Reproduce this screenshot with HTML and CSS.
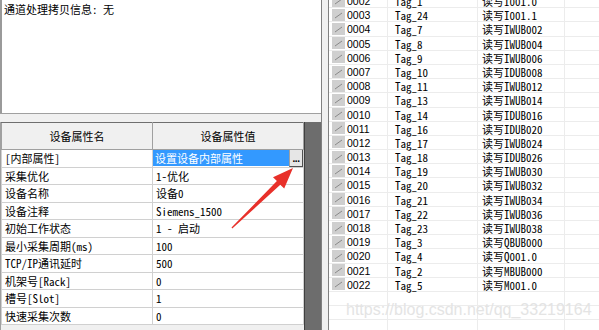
FILE: index.html
```html
<!DOCTYPE html>
<html>
<head>
<meta charset="utf-8">
<link rel="stylesheet" href="styles.css">
</head>
<body>
<div class="app">
  <div class="left">
    <div class="info">通道处理拷贝信息: 无</div>
    <div class="hsplit"></div>
    <div class="gridwrap">
      <table class="props">
        <colgroup><col class="c1"><col class="c2"></colgroup>
        <thead>
          <tr><th>设备属性名</th><th>设备属性值</th></tr>
        </thead>
        <tbody>
          <tr><td>[内部属性]</td><td class="sel"><span class="seltext">设置设备内部属性</span><span class="dots">...</span></td></tr>
          <tr><td>采集优化</td><td>1-优化</td></tr>
          <tr><td>设备名称</td><td>设备0</td></tr>
          <tr><td>设备注释</td><td>Siemens_1500</td></tr>
          <tr><td>初始工作状态</td><td>1 - 启动</td></tr>
          <tr><td>最小采集周期(ms)</td><td>100</td></tr>
          <tr><td>TCP/IP通讯延时</td><td>500</td></tr>
          <tr><td>机架号[Rack]</td><td>0</td></tr>
          <tr><td>槽号[Slot]</td><td>1</td></tr>
          <tr><td>快速采集次数</td><td>0</td></tr>
        </tbody>
      </table>
      <div class="filler"></div>
    </div>
  </div>
  <div class="vsplit"></div>
  <div class="right">
    <div class="list">
      <div class="row"><span class="ic"><svg width="13" height="12" viewBox="0 0 13 12"><rect x="0" y="0" width="13" height="12" fill="#cfcfcf"/><path d="M3 9 L10 4" stroke="#8a8a8a" stroke-width="1"/></svg></span><span class="no">0002</span><span class="tag">Tag_1</span><span class="rw">读写I001.0</span><span class="e"></span></div>
      <div class="row"><span class="ic"><svg width="13" height="12" viewBox="0 0 13 12"><rect x="0" y="0" width="13" height="12" fill="#cfcfcf"/><path d="M3 9 L10 4" stroke="#8a8a8a" stroke-width="1"/></svg></span><span class="no">0003</span><span class="tag">Tag_24</span><span class="rw">读写I001.1</span><span class="e"></span></div>
      <div class="row"><span class="ic"><svg width="13" height="12" viewBox="0 0 13 12"><rect x="0" y="0" width="13" height="12" fill="#cfcfcf"/><path d="M3 9 L10 4" stroke="#8a8a8a" stroke-width="1"/></svg></span><span class="no">0004</span><span class="tag">Tag_7</span><span class="rw">读写IWUB002</span><span class="e"></span></div>
      <div class="row"><span class="ic"><svg width="13" height="12" viewBox="0 0 13 12"><rect x="0" y="0" width="13" height="12" fill="#cfcfcf"/><path d="M3 9 L10 4" stroke="#8a8a8a" stroke-width="1"/></svg></span><span class="no">0005</span><span class="tag">Tag_8</span><span class="rw">读写IWUB004</span><span class="e"></span></div>
      <div class="row"><span class="ic"><svg width="13" height="12" viewBox="0 0 13 12"><rect x="0" y="0" width="13" height="12" fill="#cfcfcf"/><path d="M3 9 L10 4" stroke="#8a8a8a" stroke-width="1"/></svg></span><span class="no">0006</span><span class="tag">Tag_9</span><span class="rw">读写IWUB006</span><span class="e"></span></div>
      <div class="row"><span class="ic"><svg width="13" height="12" viewBox="0 0 13 12"><rect x="0" y="0" width="13" height="12" fill="#cfcfcf"/><path d="M3 9 L10 4" stroke="#8a8a8a" stroke-width="1"/></svg></span><span class="no">0007</span><span class="tag">Tag_10</span><span class="rw">读写IDUB008</span><span class="e"></span></div>
      <div class="row"><span class="ic"><svg width="13" height="12" viewBox="0 0 13 12"><rect x="0" y="0" width="13" height="12" fill="#cfcfcf"/><path d="M3 9 L10 4" stroke="#8a8a8a" stroke-width="1"/></svg></span><span class="no">0008</span><span class="tag">Tag_11</span><span class="rw">读写IWUB012</span><span class="e"></span></div>
      <div class="row"><span class="ic"><svg width="13" height="12" viewBox="0 0 13 12"><rect x="0" y="0" width="13" height="12" fill="#cfcfcf"/><path d="M3 9 L10 4" stroke="#8a8a8a" stroke-width="1"/></svg></span><span class="no">0009</span><span class="tag">Tag_13</span><span class="rw">读写IWUB014</span><span class="e"></span></div>
      <div class="row"><span class="ic"><svg width="13" height="12" viewBox="0 0 13 12"><rect x="0" y="0" width="13" height="12" fill="#cfcfcf"/><path d="M3 9 L10 4" stroke="#8a8a8a" stroke-width="1"/></svg></span><span class="no">0010</span><span class="tag">Tag_14</span><span class="rw">读写IDUB016</span><span class="e"></span></div>
      <div class="row"><span class="ic"><svg width="13" height="12" viewBox="0 0 13 12"><rect x="0" y="0" width="13" height="12" fill="#cfcfcf"/><path d="M3 9 L10 4" stroke="#8a8a8a" stroke-width="1"/></svg></span><span class="no">0011</span><span class="tag">Tag_16</span><span class="rw">读写IDUB020</span><span class="e"></span></div>
      <div class="row"><span class="ic"><svg width="13" height="12" viewBox="0 0 13 12"><rect x="0" y="0" width="13" height="12" fill="#cfcfcf"/><path d="M3 9 L10 4" stroke="#8a8a8a" stroke-width="1"/></svg></span><span class="no">0012</span><span class="tag">Tag_17</span><span class="rw">读写IWUB024</span><span class="e"></span></div>
      <div class="row"><span class="ic"><svg width="13" height="12" viewBox="0 0 13 12"><rect x="0" y="0" width="13" height="12" fill="#cfcfcf"/><path d="M3 9 L10 4" stroke="#8a8a8a" stroke-width="1"/></svg></span><span class="no">0013</span><span class="tag">Tag_18</span><span class="rw">读写IDUB026</span><span class="e"></span></div>
      <div class="row"><span class="ic"><svg width="13" height="12" viewBox="0 0 13 12"><rect x="0" y="0" width="13" height="12" fill="#cfcfcf"/><path d="M3 9 L10 4" stroke="#8a8a8a" stroke-width="1"/></svg></span><span class="no">0014</span><span class="tag">Tag_19</span><span class="rw">读写IWUB030</span><span class="e"></span></div>
      <div class="row"><span class="ic"><svg width="13" height="12" viewBox="0 0 13 12"><rect x="0" y="0" width="13" height="12" fill="#cfcfcf"/><path d="M3 9 L10 4" stroke="#8a8a8a" stroke-width="1"/></svg></span><span class="no">0015</span><span class="tag">Tag_20</span><span class="rw">读写IWUB032</span><span class="e"></span></div>
      <div class="row"><span class="ic"><svg width="13" height="12" viewBox="0 0 13 12"><rect x="0" y="0" width="13" height="12" fill="#cfcfcf"/><path d="M3 9 L10 4" stroke="#8a8a8a" stroke-width="1"/></svg></span><span class="no">0016</span><span class="tag">Tag_21</span><span class="rw">读写IWUB034</span><span class="e"></span></div>
      <div class="row"><span class="ic"><svg width="13" height="12" viewBox="0 0 13 12"><rect x="0" y="0" width="13" height="12" fill="#cfcfcf"/><path d="M3 9 L10 4" stroke="#8a8a8a" stroke-width="1"/></svg></span><span class="no">0017</span><span class="tag">Tag_22</span><span class="rw">读写IWUB036</span><span class="e"></span></div>
      <div class="row"><span class="ic"><svg width="13" height="12" viewBox="0 0 13 12"><rect x="0" y="0" width="13" height="12" fill="#cfcfcf"/><path d="M3 9 L10 4" stroke="#8a8a8a" stroke-width="1"/></svg></span><span class="no">0018</span><span class="tag">Tag_23</span><span class="rw">读写IWUB038</span><span class="e"></span></div>
      <div class="row"><span class="ic"><svg width="13" height="12" viewBox="0 0 13 12"><rect x="0" y="0" width="13" height="12" fill="#cfcfcf"/><path d="M3 9 L10 4" stroke="#8a8a8a" stroke-width="1"/></svg></span><span class="no">0019</span><span class="tag">Tag_3</span><span class="rw">读写QBUB000</span><span class="e"></span></div>
      <div class="row"><span class="ic"><svg width="13" height="12" viewBox="0 0 13 12"><rect x="0" y="0" width="13" height="12" fill="#cfcfcf"/><path d="M3 9 L10 4" stroke="#8a8a8a" stroke-width="1"/></svg></span><span class="no">0020</span><span class="tag">Tag_4</span><span class="rw">读写Q001.0</span><span class="e"></span></div>
      <div class="row"><span class="ic"><svg width="13" height="12" viewBox="0 0 13 12"><rect x="0" y="0" width="13" height="12" fill="#cfcfcf"/><path d="M3 9 L10 4" stroke="#8a8a8a" stroke-width="1"/></svg></span><span class="no">0021</span><span class="tag">Tag_2</span><span class="rw">读写MBUB000</span><span class="e"></span></div>
      <div class="row"><span class="ic"><svg width="13" height="12" viewBox="0 0 13 12"><rect x="0" y="0" width="13" height="12" fill="#cfcfcf"/><path d="M3 9 L10 4" stroke="#8a8a8a" stroke-width="1"/></svg></span><span class="no">0022</span><span class="tag">Tag_5</span><span class="rw">读写M001.0</span><span class="e"></span></div>
      <div class="row blank"><span class="ic"></span><span class="no"></span><span class="tag"></span><span class="rw"></span><span class="e"></span></div>
      <div class="row blank"><span class="ic"></span><span class="no"></span><span class="tag"></span><span class="rw"></span><span class="e"></span></div>
      <div class="row blank"><span class="ic"></span><span class="no"></span><span class="tag"></span><span class="rw"></span><span class="e"></span></div>
    </div>
    <div class="watermark">https://blog.csdn.net/qq_33219164</div>
  </div>
</div>
<svg class="arrow" width="599" height="330" viewBox="0 0 599 330">
  <polygon points="293,168 284.2,188.6 280.3,184.7 232.3,228.6 231.5,227.6 276.9,181.1 273,177.2" fill="#e8302a"/>
</svg>
</body>
</html>
```
FILE: styles.css
```css
html, body {
  margin: 0;
  padding: 0;
  background: #ffffff;
}
body {
  width: 599px;
  height: 330px;
  overflow: hidden;
  position: relative;
  font-family: "Noto Sans Mono CJK SC", "Noto Sans CJK SC", monospace;
  font-size: 11px;
  color: #000;
}
.app {
  display: flex;
  width: 599px;
  height: 330px;
}
.left {
  width: 321px;
  display: flex;
  flex-direction: column;
}
.info {
  height: 113px;
  box-sizing: border-box;
  border-left: 2px solid #9a9a9a;
  padding: 3px 0 0 2px;
  line-height: 13px;
  background: #fff;
}
.hsplit {
  height: 9px;
  box-sizing: border-box;
  border-top: 1px solid #a0a0a0;
  background: #f0f0f0;
}
.gridwrap {
  flex: 1;
  display: flex;
  background: #f0f0f0;
  border-left: 1px solid #a0a0a0;
  overflow: hidden;
}
.props {
  width: 302px;
  border-collapse: collapse;
  table-layout: fixed;
  background: #fff;
  align-self: flex-start;
}
.c1 { width: 151px; }
.c2 { width: 151px; }
.props th {
  height: 26px;
  background: #f0f0f0;
  font-weight: normal;
  border: 1px solid #a0a0a0;
  border-top: 1px solid #6f6f6f;
  padding: 0;
  text-align: center;
}
.props td {
  height: 16.5px;
  border: 1px solid #d0d0d0;
  padding: 0 0 0 3px;
  white-space: nowrap;
  overflow: hidden;
  line-height: 16px;
}
.props td.sel {
  padding: 0;
  position: relative;
}
.seltext {
  display: block;
  background: #3399ff;
  color: #fff;
  padding-left: 2px;
  margin-right: 14px;
}
.dots {
  position: absolute;
  right: 0;
  top: 0;
  width: 14px;
  height: 17px;
  background: #e6e6e6;
  border-left: 1px solid #a0a0a0;
  border-right: 1px solid #505050;
  border-bottom: 1px solid #505050;
  box-sizing: border-box;
  text-align: center;
  font-family: "Liberation Sans", sans-serif;
  font-size: 10px;
  font-weight: bold;
  letter-spacing: -0.5px;
  line-height: 17px;
}
.filler {
  width: 16px;
  background: #6d6d6d;
  border-left: 1px solid #404040;
}
.vsplit {
  width: 8px;
  box-sizing: border-box;
  border-left: 1px solid #808080;
  border-right: 1px solid #808080;
  background: #f0f0f0;
}
.right {
  flex: 1;
  position: relative;
  overflow: hidden;
  background: #fff;
}
.list {
  margin-top: -6px;
}
.row {
  display: flex;
  height: 14.2px;
  box-sizing: border-box;
  border-bottom: 1px solid #ececec;
  align-items: center;
}
.ic {
  width: 17px;
  height: 100%;
  display: flex;
  align-items: center;
  justify-content: center;
  padding-left: 2px;
  box-sizing: border-box;
}
.no, .tag, .rw {
  height: 100%;
  line-height: 14px;
  border-right: 1px solid #ececec;
  box-sizing: border-box;
  white-space: nowrap;
}
.no {
  width: 42px;
  font-family: "Liberation Sans", sans-serif;
  font-size: 10.5px;
  padding-left: 1px;
}
.tag {
  width: 90px;
  padding-left: 7px;
}
.rw {
  width: 87px;
  padding-left: 4px;
}
.e {
  flex: 1;
}
.watermark {
  position: absolute;
  left: 17px;
  top: 301px;
  font-family: "Liberation Sans", sans-serif;
  font-size: 16px;
  color: #e4e4e4;
  white-space: nowrap;
}
.arrow {
  position: absolute;
  left: 0;
  top: 0;
  pointer-events: none;
}
```
